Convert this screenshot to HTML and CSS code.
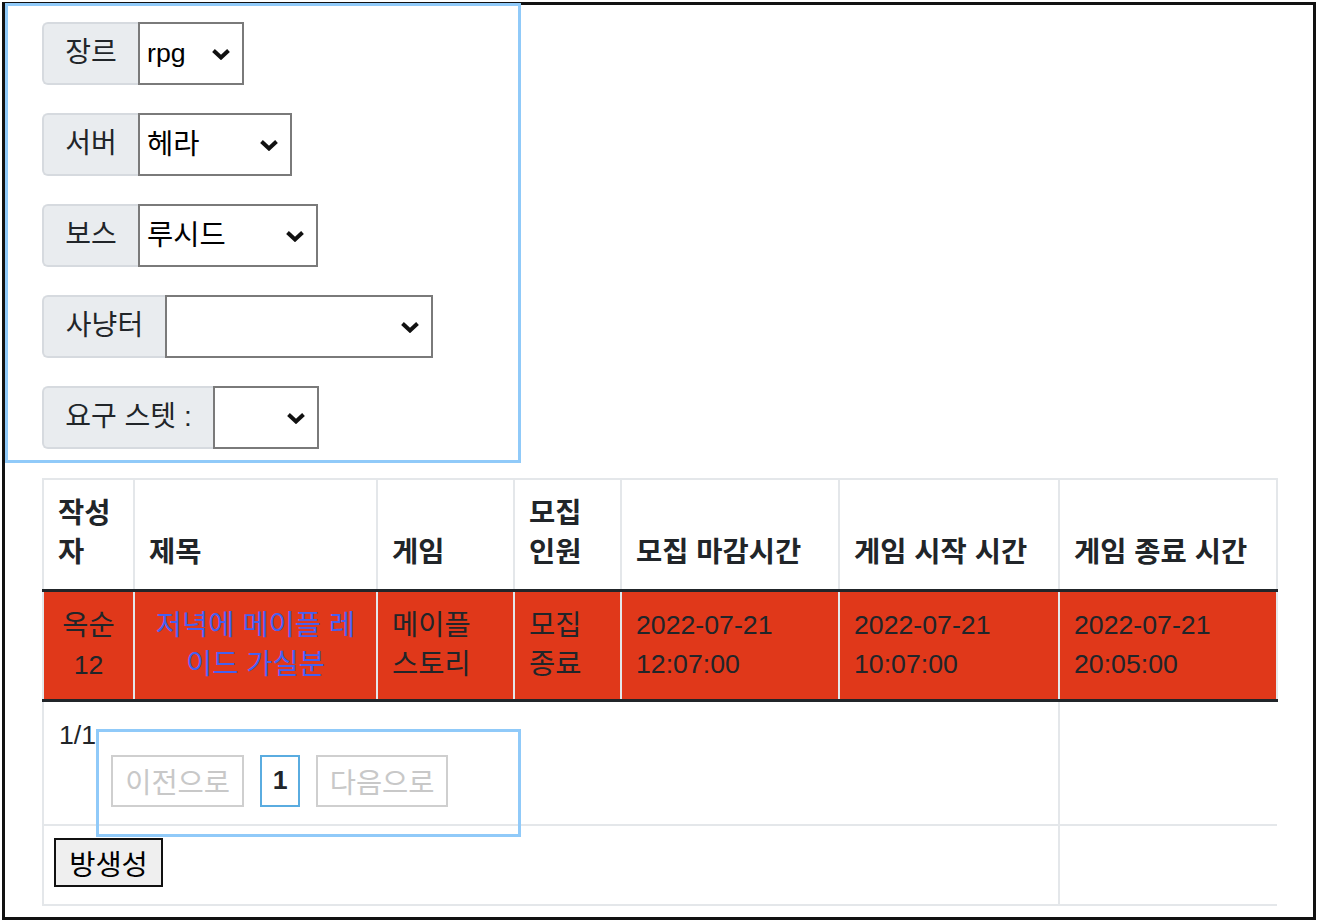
FILE: index.html
```html
<!DOCTYPE html>
<html lang="ko">
<head>
<meta charset="utf-8">
<title>파티 모집 게시판</title>
<link rel="stylesheet" href="styles.css">
</head>
<body>
<div class="frame">
  <form class="filters">
    <div class="group">
      <span class="label lw-s">장르</span>
      <div class="select sw-106"><span>rpg</span><svg class="chev" viewBox="0 0 20 12"><path d="M2.5 2.5 L10 9.5 L17.5 2.5"/></svg></div>
    </div>
    <div class="group">
      <span class="label lw-s">서버</span>
      <div class="select sw-154"><span class="kr">헤라</span><svg class="chev" viewBox="0 0 20 12"><path d="M2.5 2.5 L10 9.5 L17.5 2.5"/></svg></div>
    </div>
    <div class="group">
      <span class="label lw-s">보스</span>
      <div class="select sw-180"><span class="kr">루시드</span><svg class="chev" viewBox="0 0 20 12"><path d="M2.5 2.5 L10 9.5 L17.5 2.5"/></svg></div>
    </div>
    <div class="group">
      <span class="label lw-m">사냥터</span>
      <div class="select sw-268"><span></span><svg class="chev" viewBox="0 0 20 12"><path d="M2.5 2.5 L10 9.5 L17.5 2.5"/></svg></div>
    </div>
    <div class="group">
      <span class="label lw-l">요구 스텟 :</span>
      <div class="select sw-106"><span></span><svg class="chev" viewBox="0 0 20 12"><path d="M2.5 2.5 L10 9.5 L17.5 2.5"/></svg></div>
    </div>
  </form>

  <table class="board">
    <colgroup>
      <col class="c1"><col class="c2"><col class="c3"><col class="c4"><col class="c5"><col class="c6"><col class="c7">
    </colgroup>
    <thead>
      <tr>
        <th>작성자</th>
        <th>제목</th>
        <th>게임</th>
        <th>모집 인원</th>
        <th>모집 마감시간</th>
        <th>게임 시작 시간</th>
        <th>게임 종료 시간</th>
      </tr>
    </thead>
    <tbody class="rows">
      <tr class="closed">
        <td class="center"><span class="kr">옥순</span> 12</td>
        <td class="center kr"><a class="title" href="#">저녁에 메이플 레이드 가실분</a></td>
        <td class="kr">메이플 스토리</td>
        <td class="kr">모집 종료</td>
        <td>2022-07-21 12:07:00</td>
        <td>2022-07-21 10:07:00</td>
        <td>2022-07-21 20:05:00</td>
      </tr>
    </tbody>
    <tbody class="foot">
      <tr class="pager-row">
        <td colspan="6">
          <div class="pager-wrap">
            <span class="count">1/1</span>
            <div class="pager">
              <button type="button" class="pg pg-prev">이전으로</button>
              <button type="button" class="pg pg-cur">1</button>
              <button type="button" class="pg pg-next">다음으로</button>
            </div>
          </div>
        </td>
        <td class="last"></td>
      </tr>
      <tr class="action-row">
        <td colspan="6"><button type="button" class="create">방생성</button></td>
        <td class="last"></td>
      </tr>
    </tbody>
  </table>
</div>
</body>
</html>
```

FILE: styles.css
```css
* {
  box-sizing: border-box;
}

html,
body {
  margin: 0;
  background: #ffffff;
}

body {
  font-family: "Liberation Sans", "Noto Sans CJK KR", sans-serif;
  font-size: 26.7px;
  color: #212529;
}

.kr {
  font-size: 28.5px;
}

.frame {
  margin: 2px 0 0 2px;
  width: 1314px;
  height: 918px;
  border: 3px solid #111111;
}

/* filter panel */
.filters {
  margin: -2px 0 0 0;
  width: 516px;
  height: 460px;
  border: 3px solid #90caf9;
  padding: 16px 0 0 34px;
  display: flex;
  flex-direction: column;
  gap: 28px;
}

.group {
  display: flex;
  height: 63px;
}

.label {
  display: flex;
  align-items: center;
  justify-content: center;
  background: #e9ecef;
  border: 2px solid #d6dadf;
  border-right: none;
  border-radius: 6px 0 0 6px;
  color: #212529;
  white-space: nowrap;
  font-size: 28px;
  line-height: 40px;
  padding-bottom: 1px;
}

.lw-s { width: 96px; }
.lw-m { width: 123px; }
.lw-l { width: 171px; }

.select {
  display: flex;
  align-items: center;
  justify-content: space-between;
  background: #ffffff;
  border: 2px solid #7a7a7a;
  padding: 0 11px 2px 7px;
  color: #000000;
  line-height: 40px;
}

.sw-106 { width: 106px; }
.sw-154 { width: 154px; }
.sw-180 { width: 180px; }
.sw-268 { width: 268px; }

.chev {
  width: 20px;
  height: 12px;
  flex: none;
  margin-top: 2px;
}

.chev path {
  fill: none;
  stroke: #111111;
  stroke-width: 4;
}

/* table */
.board {
  margin: 15px 0 0 37px;
  width: 1234px;
  border-collapse: collapse;
  table-layout: fixed;
}

.c1 { width: 91px; }
.c2 { width: 243px; }
.c3 { width: 137px; }
.c4 { width: 107px; }
.c5 { width: 218px; }
.c6 { width: 220px; }
.c7 { width: 218px; }

.board th,
.board td {
  border: 2px solid #e4e7ea;
  padding: 13px 14px;
  line-height: 39px;
}

.board th {
  height: 111px;
  text-align: left;
  vertical-align: bottom;
  font-weight: 700;
  font-size: 28.5px;
  padding-bottom: 17px;
}

.rows td {
  height: 110px;
  vertical-align: top;
  background: #e0381a;
  border-top: 3px solid #212529;
  border-color: #e4e7ea;
  border-top-color: #212529;
  padding-top: 14px;
  padding-bottom: 10px;
}

.center {
  text-align: center;
}

.title {
  color: #4560f0;
  text-decoration: none;
}

.foot td {
  vertical-align: top;
}

.foot .pager-row td {
  border-top: 3px solid #212529;
  height: 122px;
}

.foot .action-row td {
  height: 80px;
  padding-top: 12px;
  padding-left: 10px;
}

.foot td.last {
  border-right: none;
}

.pager-wrap {
  display: flex;
  align-items: flex-start;
  height: 96px;
}

.count {
  line-height: 40px;
  margin-left: 1px;
}

.pager {
  flex: none;
  margin-top: 14px;
  width: 425px;
  height: 108px;
  border: 3px solid #90caf9;
  padding: 23px 12px;
  display: flex;
  align-items: flex-start;
  gap: 16px;
}

.pg {
  height: 52px;
  padding: 0;
  margin: 0;
  background: transparent;
  border: 2px solid #cfcfcf;
  color: #c8c8c8;
  font-family: "Liberation Sans", "Noto Sans CJK KR", sans-serif;
  font-size: 28.5px;
  display: flex;
  align-items: center;
  justify-content: center;
}

.pg-prev { width: 133px; }
.pg-next { width: 132px; }

.pg-cur {
  width: 40px;
  border-color: #5aace0;
  color: #212529;
  font-size: 26.7px;
  font-weight: 700;
}

.create {
  width: 109px;
  height: 49px;
  padding: 0;
  background: #efefef;
  border: 2px solid #111111;
  color: #000000;
  font-family: "Liberation Sans", "Noto Sans CJK KR", sans-serif;
  font-size: 28.5px;
}
```
